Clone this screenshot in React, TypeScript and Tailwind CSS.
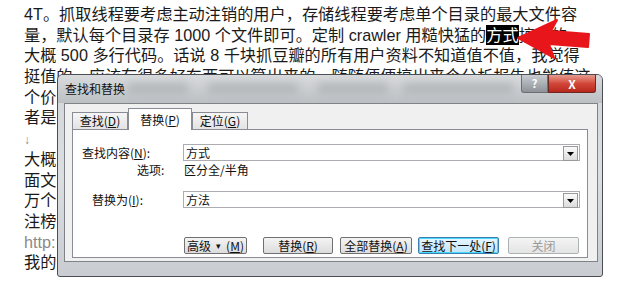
import React from "react";

const docLines: { text: React.ReactNode; className?: string }[] = [
  { text: "4T。抓取线程要考虑主动注销的用户，存储线程要考虑单个目录的最大文件容" },
  {
    text: (
      <>
        量，默认每个目录存 1000 个文件即可。定制 crawler 用糙快猛的
        <span className="inline-block bg-black text-white">方式</span>
        搞定的
      </>
    ),
  },
  { text: "大概 500 多行代码。话说 8 千块抓豆瓣的所有用户资料不知道值不值，我觉得" },
  { text: "挺值的，应该有很多好东西可以算出来的，随随便便搞出来个分析报告也能值这" },
  { text: "个价" },
  { text: "者是" },
  { text: <span className="text-[12px] text-[#888]">↓</span> },
  { text: "大概" },
  { text: "面文" },
  { text: "万个" },
  { text: "注榜" },
  { text: "http:", className: "text-[#8a8a8a]" },
  { text: "我的" },
];

// blurred smudges of the text behind the glass title bar
const smudges = [
  { l: 70, w: 60 },
  { l: 150, w: 90 },
  { l: 260, w: 70 },
  { l: 345, w: 110 },
];

const Btn = ({
  children,
  className = "",
}: {
  children: React.ReactNode;
  className?: string;
}) => (
  <div
    className={`h-[17px] flex items-center justify-center rounded-[2px] border text-[12px] leading-none ${className}`}
  >
    {children}
  </div>
);

const DropArrow = () => (
  <div className="absolute right-[1px] top-[1px] w-[15px] h-[15px] border border-[#9a9a9a] bg-gradient-to-b from-[#fafafa] to-[#dcdcdc] flex items-center justify-center">
    <svg width="7" height="4" viewBox="0 0 7 4">
      <path d="M0 0h7L3.5 4z" fill="#000" />
    </svg>
  </div>
);

export default function App() {
  return (
    <div
      className="relative w-[619px] h-[292px] overflow-hidden bg-white"
      style={{ fontFamily: '"Liberation Sans", "Noto Sans CJK SC", sans-serif' }}
    >
      {/* document text */}
      <div className="pt-[4px] pl-[24px] text-[16.2px] leading-[20.7px] text-[#1a1a1a]">
        {docLines.map((l, i) => (
          <div key={i} className={`whitespace-nowrap h-[20.7px] ${l.className ?? ""}`}>
            {l.text}
          </div>
        ))}
      </div>

      {/* red arrow */}
      <svg
        className="absolute left-[512px] top-[16px]"
        width="82"
        height="46"
        viewBox="512 16 82 46"
      >
        <path
          d="M518 38 L557 20 L551 31 L589 34 L588 47 L549 44 L554 58 Z"
          fill="#e8161b"
          stroke="#e8161b"
          strokeWidth="2"
          strokeLinejoin="round"
        />
      </svg>

      {/* find & replace dialog */}
      <div
        className="absolute left-[57px] top-[74px] w-[546px] h-[203px] border border-[#4a4e54] rounded-t-[6px] rounded-b-[3px] bg-gradient-to-b from-[#d3d6d9] via-[#dcdfe2] to-[#c9ccd0] flex flex-col"
        style={{ fontFamily: '"Noto Sans CJK SC", "Liberation Sans", sans-serif' }}
      >
        {/* title bar */}
        <div className="relative h-[28px] shrink-0 rounded-t-[5px] overflow-hidden bg-gradient-to-b from-[#d9dbdd] to-[#bcc0c3]">
          {smudges.map((s, i) => (
            <div
              key={i}
              className="absolute top-[8px] h-[10px] bg-[#8e9296] opacity-40 blur-[4px]"
              style={{ left: s.l, width: s.w }}
            />
          ))}
          <div className="absolute left-[7px] top-[6px] text-[12px] leading-[16px] text-[#111]">
            查找和替换
          </div>
          <div className="absolute right-[54px] top-0 w-[27px] h-[18px] rounded-bl-[3px] border border-t-0 border-[#6b6f74] bg-gradient-to-b from-[#c9cdd1] to-[#8e9399] flex items-center justify-center text-[11px] font-bold text-white">
            ?
          </div>
          <div className="absolute right-[6px] top-0 w-[48px] h-[18px] rounded-br-[3px] border border-t-0 border-[#6b2a24] bg-gradient-to-b from-[#e59a8f] via-[#d2473a] to-[#b8261b] flex items-center justify-center text-[12px] font-bold text-white">
            X
          </div>
        </div>

        {/* client area */}
        <div className="ml-[6px] w-[534px] h-[159px] border border-[#7f8388] bg-[#f0f0f0] flex flex-col">
          {/* tabs */}
          <div className="h-[25px] pl-[7px] flex items-end text-[12px] text-[#111]">
            <div className="w-[56px] h-[17px] border border-b-0 border-[#898c95] bg-gradient-to-b from-[#f5f5f5] to-[#e3e3e3] flex items-center justify-center">
              查找(<u>D</u>)
            </div>
            <div className="relative z-10 w-[64px] h-[22px] -mb-px border border-b-0 border-[#898c95] bg-white flex items-center justify-center">
              替换(<u>P</u>)
            </div>
            <div className="w-[56px] h-[17px] border border-b-0 border-[#898c95] bg-gradient-to-b from-[#f5f5f5] to-[#e3e3e3] flex items-center justify-center">
              定位(<u>G</u>)
            </div>
          </div>

          {/* tab panel */}
          <div className="ml-[7px] w-[516px] h-[129px] border border-[#898c95] bg-white text-[12px] text-[#111] leading-none">
            <div className="mt-[14px] h-[17px] flex items-center">
              <span className="pl-[9px] w-[110px]">查找内容(<u>N</u>):</span>
              <div className="relative w-[397px] h-[17px] border border-[#abadb3] flex items-center pl-[2px]">
                方式
                <DropArrow />
              </div>
            </div>
            <div className="h-[16px] mt-[1px] flex items-center">
              <span className="pl-[64px] w-[110px]">选项:</span>
              <span className="pl-[1px]">区分全/半角</span>
            </div>
            <div className="mt-[13px] h-[17px] flex items-center">
              <span className="pl-[19px] w-[110px]">替换为(<u>I</u>):</span>
              <div className="relative w-[397px] h-[17px] border border-[#abadb3] flex items-center pl-[2px]">
                方法
                <DropArrow />
              </div>
            </div>
            <div className="mt-[29px] flex items-center pl-[111px]">
              <Btn className="w-[63px] border-[#707070] bg-gradient-to-b from-[#f4f4f4] to-[#dcdcdc]">
                高级 <span className="mx-[5px] text-[9px]">▾</span> (<u>M</u>)
              </Btn>
              <Btn className="ml-[16px] w-[70px] border-[#707070] bg-gradient-to-b from-[#f4f4f4] to-[#dcdcdc]">
                替换(<u>R</u>)
              </Btn>
              <Btn className="ml-[7px] w-[72px] border-[#707070] bg-gradient-to-b from-[#f4f4f4] to-[#dcdcdc]">
                全部替换(<u>A</u>)
              </Btn>
              <Btn className="ml-[6px] w-[81px] border-[#3c7fb1] bg-gradient-to-b from-[#eaf6fd] to-[#bee6fd] shadow-[inset_0_0_0_1px_#48d8fb]">
                查找下一处(<u>F</u>)
              </Btn>
              <Btn className="ml-[9px] w-[71px] border-[#adb2b5] bg-gradient-to-b from-[#f4f4f4] to-[#e4e4e4] text-[#9a9a9a]">
                关闭
              </Btn>
            </div>
          </div>
        </div>
      </div>
    </div>
  );
}
